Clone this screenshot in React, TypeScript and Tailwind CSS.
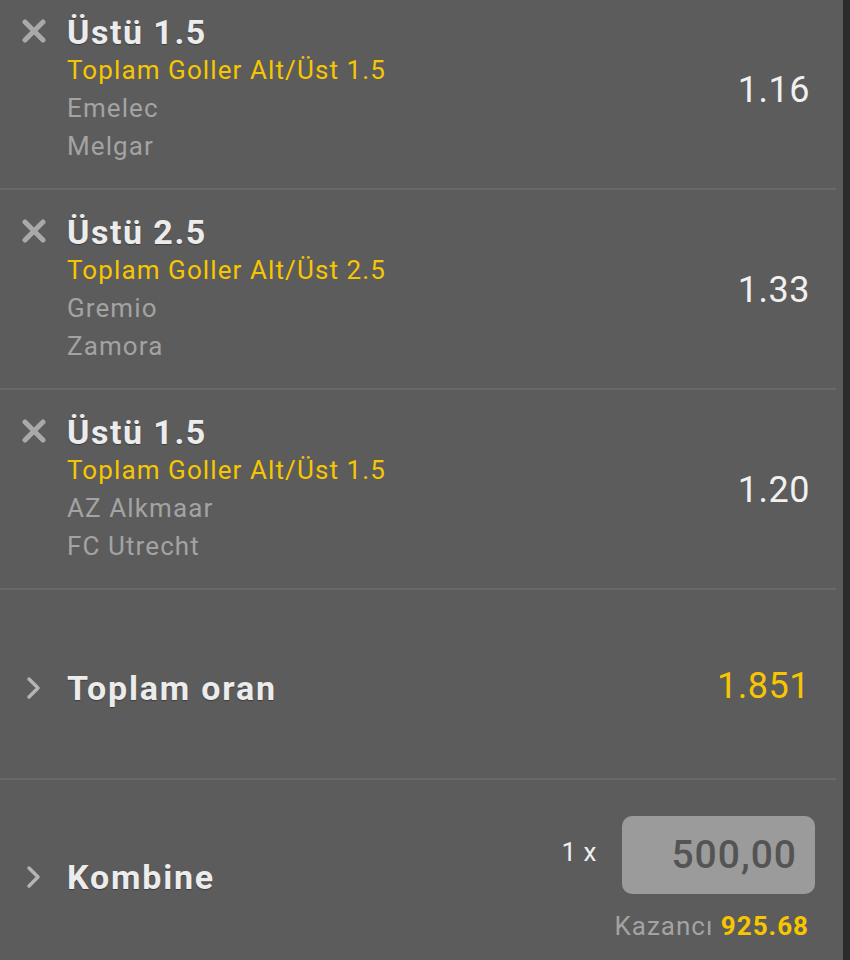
import React from "react"

interface Bet {
  pick: string
  market: string
  home: string
  away: string
  odd: string
}

const BETS: Bet[] = [
  { pick: "Üstü 1.5", market: "Toplam Goller Alt/Üst 1.5", home: "Emelec", away: "Melgar", odd: "1.16" },
  { pick: "Üstü 2.5", market: "Toplam Goller Alt/Üst 2.5", home: "Gremio", away: "Zamora", odd: "1.33" },
  { pick: "Üstü 1.5", market: "Toplam Goller Alt/Üst 1.5", home: "AZ Alkmaar", away: "FC Utrecht", odd: "1.20" },
]

const shadow = "[text-shadow:0_1px_1px_rgba(0,0,0,0.35)]"

function CloseIcon() {
  return (
    <svg width="24" height="24" viewBox="0 0 24 24" className="text-[#a9a9a9]">
      <path d="M3 3 L21 21 M21 3 L3 21" stroke="currentColor" strokeWidth="5" strokeLinecap="round" fill="none" />
    </svg>
  )
}

function Chevron() {
  return (
    <svg width="16" height="24" viewBox="0 0 16 24" className="text-[#b4b4b4]">
      <path d="M3 3 L12 12 L3 21" stroke="currentColor" strokeWidth="3.5" strokeLinecap="round" strokeLinejoin="round" fill="none" />
    </svg>
  )
}

function BetRow({ bet }: { bet: Bet }) {
  return (
    <div className="h-[200px] border-b-2 border-[#696969] flex">
      <div className="w-[67px] shrink-0 pt-[29px] pl-[22px]">
        <CloseIcon />
      </div>
      <div className="flex-1 pt-[23px] leading-[38px]">
        <div className={`text-[34px] font-bold text-[#ececec] tracking-[1.5px] ${shadow}`}>{bet.pick}</div>
        <div className="text-[26px] text-[#f7c600] tracking-[1.1px]">{bet.market}</div>
        <div className="text-[26px] text-[#a3a3a3] tracking-[1.1px]">{bet.home}</div>
        <div className="text-[26px] text-[#a3a3a3] tracking-[1.1px]">{bet.away}</div>
      </div>
      <div className="pr-[26px] flex items-center pt-[2px]">
        <span className="text-[36px] text-[#f0f0f0] tracking-[0.5px]">{bet.odd}</span>
      </div>
    </div>
  )
}

export default function App() {
  return (
    <div className="w-[850px] h-[960px] overflow-hidden flex font-['Roboto',sans-serif]">
      <div className="w-[843px] bg-[#5c5c5c] pr-[7px] overflow-hidden">
        <div className="-mt-[10px]">
          {BETS.map((bet, i) => (
            <BetRow key={i} bet={bet} />
          ))}

          {/* Total odds */}
          <div className="h-[190px] border-b-2 border-[#696969] flex items-center pt-[4px]">
            <div className="w-[67px] shrink-0 pl-[26px] pt-[4px] flex items-center">
              <Chevron />
            </div>
            <div className={`flex-1 text-[34px] font-bold text-[#ececec] tracking-[1.8px] pt-[4px] ${shadow}`}>Toplam oran</div>
            <div className="pr-[26px] text-[36px] text-[#f7c600] tracking-[0.5px]">1.851</div>
          </div>

          {/* Combination stake */}
          <div className="h-[180px] flex">
            <div className="flex-1 flex items-start pt-[77px]">
              <div className="w-[67px] shrink-0 pl-[26px] pt-[8px]">
                <Chevron />
              </div>
              <div className={`text-[34px] leading-[40px] font-bold text-[#ececec] tracking-[1.8px] ${shadow}`}>Kombine</div>
            </div>
            <div className="pr-[21px] pt-[36px] flex flex-col items-end">
              <div className="flex items-center">
                <span className="text-[26px] text-[#efefef] mr-[25px] tracking-[0.5px] -mt-[6px]">1 x</span>
                <div className="w-[193px] h-[78px] rounded-[10px] bg-[#9b9b9b] flex items-center justify-end pr-[18px]">
                  <span className="text-[39px] font-medium text-[#545454] tracking-[1px]">500,00</span>
                </div>
              </div>
              <div className="mt-[17px] mr-[6px] leading-[30px] text-[26px] tracking-[1px]">
                <span className="text-[#a3a3a3]">Kazancı </span>
                <span className="font-bold text-[#f7c600]">925.68</span>
              </div>
            </div>
          </div>
        </div>
      </div>
      <div className="w-[7px] bg-[#2b2b2b]" />
    </div>
  )
}
